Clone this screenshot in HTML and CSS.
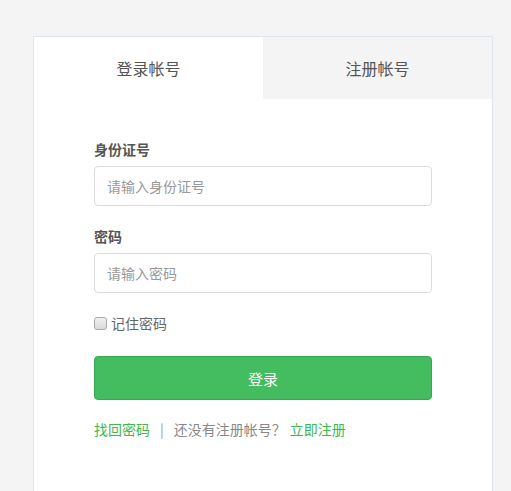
FILE: index.html
```html
<!DOCTYPE html>
<html lang="zh-CN">
<head>
<meta charset="utf-8">
<title>登录</title>
<link rel="stylesheet" href="styles.css">
</head>
<body>
<div class="page">
  <div class="card">
    <div class="tabs">
      <div class="tab active">登录帐号</div>
      <div class="tab">注册帐号</div>
    </div>
    <form class="form">
      <label class="label">身份证号</label>
      <input class="input" type="text" placeholder="请输入身份证号">
      <label class="label">密码</label>
      <input class="input" type="password" placeholder="请输入密码">
      <label class="remember"><input class="check" type="checkbox"><span>记住密码</span></label>
      <button class="btn" type="button">登录</button>
      <div class="links">
        <a class="link">找回密码</a>
        <span class="sep">|</span>
        <span class="muted">还没有注册帐号？</span>
        <a class="link">立即注册</a>
      </div>
    </form>
  </div>
</div>
</body>
</html>
```
FILE: styles.css
```css
* { box-sizing: border-box; }
html, body { margin: 0; padding: 0; }
body {
  background: #f4f4f4;
  font-family: "Noto Sans CJK SC", "Noto Sans", sans-serif;
  color: #555;
  overflow: hidden;
  height: 491px;
}
.page {
  padding-top: 36px;
  padding-left: 33px;
  width: 511px;
  height: 491px;
  overflow: hidden;
}
.card {
  width: 460px;
  height: 456px;
  background: #fff;
  border: 1px solid #dde7f2;
}
.tabs {
  display: flex;
  height: 62px;
}
.tab {
  flex: 1;
  display: flex;
  align-items: center;
  justify-content: center;
  font-size: 16px;
  color: #555;
  background: #f4f4f4;
}
.tab.active { background: #fff; }
.form {
  display: flex;
  flex-direction: column;
  padding: 40px 60px 0 60px;
}
.label {
  font-size: 14px;
  line-height: 20px;
  font-weight: bold;
  color: #555;
  margin-bottom: 7px;
}
.input {
  height: 40px;
  border: 1px solid #dcdcdc;
  border-radius: 4px;
  padding: 0 12px;
  font-size: 14px;
  font-family: inherit;
  color: #555;
  margin-bottom: 20px;
  outline: none;
}
.input::placeholder { color: #999; }
.remember {
  display: flex;
  align-items: center;
  font-size: 14px;
  line-height: 20px;
  color: #666;
  margin-bottom: 23px;
}
.check {
  appearance: none;
  -webkit-appearance: none;
  width: 13px;
  height: 13px;
  margin: 0 4px 0 0;
  border: 1px solid #a9a9a9;
  border-radius: 3px;
  background: linear-gradient(#f0f0f0, #dadada);
}
.btn {
  height: 44px;
  background: #43bd60;
  border: 1px solid #38a553;
  border-radius: 4px;
  color: #fff;
  font-size: 15px;
  font-family: inherit;
  margin-bottom: 19px;
}
.links {
  display: flex;
  align-items: center;
  gap: 8px;
  font-size: 14px;
  line-height: 20px;
}
.link { color: #3eb651; text-decoration: none; }
.sep { color: #999; margin: 0 2px; }
.muted { color: #888; margin-right: -4px; }
```
